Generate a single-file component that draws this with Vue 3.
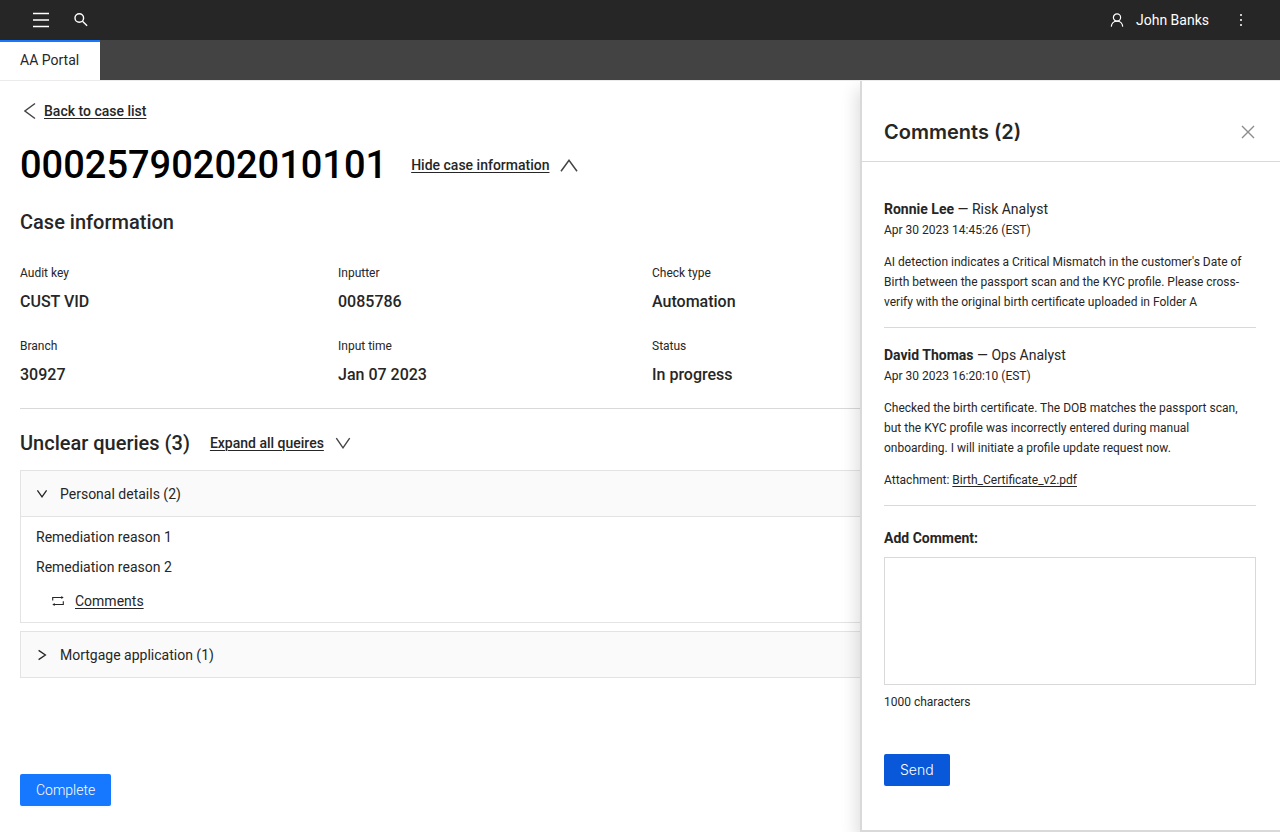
<script setup>
import { ref } from 'vue'

const facts = [
  { label: 'Audit key', value: 'CUST VID' },
  { label: 'Inputter', value: '0085786' },
  { label: 'Check type', value: 'Automation' },
  { label: 'Branch', value: '30927' },
  { label: 'Input time', value: 'Jan 07 2023' },
  { label: 'Status', value: 'In progress' },
]

const comments = [
  {
    author: 'Ronnie Lee',
    role: 'Risk Analyst',
    date: 'Apr 30 2023 14:45:26 (EST)',
    text: "AI detection indicates a Critical Mismatch in the customer's Date of Birth between the passport scan and the KYC profile. Please cross-verify with the original birth certificate uploaded in Folder A",
  },
  {
    author: 'David Thomas',
    role: 'Ops Analyst',
    date: 'Apr 30 2023 16:20:10 (EST)',
    text: 'Checked the birth certificate. The DOB matches the passport scan, but the KYC profile was incorrectly entered during manual onboarding. I will initiate a profile update request now.',
    attachment: 'Birth_Certificate_v2.pdf',
  },
]

const draft = ref('')
</script>

<template>
  <div class="page">
    <header class="topbar">
      <button class="icon-btn" type="button" aria-label="Menu">
        <svg width="18" height="16" viewBox="0 0 18 16" fill="none" stroke="#fff" stroke-width="1.5">
          <path d="M1 1.5h16M1 8h16M1 14.5h16" />
        </svg>
      </button>
      <button class="icon-btn search" type="button" aria-label="Search">
        <svg width="16" height="16" viewBox="0 0 16 16" fill="none" stroke="#fff" stroke-width="1.4">
          <circle cx="6.3" cy="6" r="4.3" />
          <path d="M9.5 9.2l4.6 4.6" />
        </svg>
      </button>
      <div class="user">
        <svg width="14" height="14" viewBox="0 0 14 14" fill="none" stroke="#fff" stroke-width="1.2">
          <circle cx="7" cy="4.5" r="3.6" />
          <path d="M1.3 13.6c.2-3 2.4-5.4 5.7-5.4s5.5 2.4 5.7 5.4" />
        </svg>
        <span>John Banks</span>
      </div>
      <button class="icon-btn" type="button" aria-label="More">
        <svg width="16" height="16" viewBox="0 0 16 16" fill="#fff">
          <circle cx="8" cy="3" r="1" />
          <circle cx="8" cy="8" r="1" />
          <circle cx="8" cy="13" r="1" />
        </svg>
      </button>
    </header>

    <nav class="tabs">
      <a class="tab" href="#">AA Portal</a>
    </nav>

    <div class="body">
      <main class="main">
        <a class="back" href="#">
          <svg width="12" height="18" viewBox="0 0 12 18" fill="none" stroke="#444" stroke-width="1.5">
            <path d="M11 1.5L.9 9 11 16.5" />
          </svg>
          <span class="underlined">Back to case list</span>
        </a>

        <div class="case-head">
          <h1>00025790202010101</h1>
          <button class="toggle" type="button">
            <span class="underlined">Hide case information</span>
            <svg width="18" height="14" viewBox="0 0 18 14" fill="none" stroke="#444" stroke-width="1.5">
              <path d="M1 13.3L9 2.3l8 11" />
            </svg>
          </button>
        </div>

        <h2 class="info-title">Case information</h2>
        <dl class="facts">
          <div v-for="fact in facts" :key="fact.label">
            <dt>{{ fact.label }}</dt>
            <dd>{{ fact.value }}</dd>
          </div>
        </dl>

        <section class="queries">
          <div class="queries-head">
            <h2>Unclear queries (3)</h2>
            <button class="toggle" type="button">
              <span class="underlined">Expand all queires</span>
              <svg width="16" height="12" viewBox="0 0 16 12" fill="none" stroke="#444" stroke-width="1.4">
                <path d="M1.3 1.2L8 10.8 14.7 1.2" />
              </svg>
            </button>
          </div>

          <div class="card">
            <button class="card-head" type="button" aria-expanded="true">
              <svg width="12" height="12" viewBox="0 0 12 12" fill="none" stroke="#262626" stroke-width="1.3">
                <path d="M1.4 2.4L6 8.8l4.6-6.4" />
              </svg>
              <span>Personal details (2)</span>
            </button>
            <div class="card-body">
              <p>Remediation reason 1</p>
              <p>Remediation reason 2</p>
              <a class="comments-link" href="#">
                <svg width="12" height="12" viewBox="0 0 12 12" fill="none" stroke="#262626" stroke-width="1.1">
                  <path d="M.7 5.6V2.5h9.5M11.3 6.2v3.3H1.8" />
                  <path d="M9.3.9l2.4 1.6-2.4 1.6zM2.7 7.9L.3 9.5l2.4 1.6z" fill="#262626" stroke="none" />
                </svg>
                <span class="underlined">Comments</span>
              </a>
            </div>
          </div>

          <div class="card">
            <button class="card-head" type="button" aria-expanded="false">
              <svg width="12" height="12" viewBox="0 0 12 12" fill="none" stroke="#262626" stroke-width="1.3">
                <path d="M2.6 1.4L9.4 6l-6.8 4.6" />
              </svg>
              <span>Mortgage application (1)</span>
            </button>
          </div>
        </section>

        <button class="primary complete" type="button">Complete</button>
      </main>

      <aside class="drawer">
        <div class="drawer-head">
          <h2>Comments (2)</h2>
          <button class="icon-btn" type="button" aria-label="Close">
            <svg width="16" height="16" viewBox="0 0 16 16" fill="none" stroke="#8c8c8c" stroke-width="1.4">
              <path d="M2 2l12 12M14 2L2 14" />
            </svg>
          </button>
        </div>
        <div class="drawer-body">
          <article v-for="comment in comments" :key="comment.author" class="comment">
            <p class="author"><strong>{{ comment.author }}</strong> — {{ comment.role }}</p>
            <p class="date">{{ comment.date }}</p>
            <p class="text">{{ comment.text }}</p>
            <p v-if="comment.attachment" class="text">
              Attachment: <a class="underlined" href="#">{{ comment.attachment }}</a>
            </p>
          </article>
          <form class="add" @submit.prevent>
            <label for="new-comment">Add Comment:</label>
            <textarea id="new-comment" v-model="draft" maxlength="1000"></textarea>
            <p class="hint">1000 characters</p>
            <button class="primary send" type="submit">Send</button>
          </form>
        </div>
      </aside>
    </div>
  </div>
</template>

<style>
body {
  background: #fff;
}
</style>

<style scoped>
.page {
  display: flex;
  flex-direction: column;
  min-height: 100vh;
  box-sizing: border-box;
  font-family: Roboto, "Liberation Sans", sans-serif;
  font-size: 14px;
  line-height: 20px;
  color: #262626;
}
.page * {
  box-sizing: border-box;
}
h1, h2, p, dl, dd {
  margin: 0;
}
a {
  color: inherit;
  text-decoration: none;
}
button {
  font: inherit;
  color: inherit;
  background: none;
  border: 0;
  padding: 0;
}
svg {
  display: block;
  flex: none;
}
h2 {
  font-size: 20px;
  line-height: 28px;
  font-weight: 500;
}
.underlined {
  text-decoration: underline;
  text-decoration-thickness: 1px;
  text-underline-offset: 2px;
}

.topbar {
  display: flex;
  align-items: center;
  height: 40px;
  padding: 0 31px 0 32px;
  background: #262626;
  color: #fff;
}
.search {
  margin-left: 23px;
}
.user {
  display: flex;
  align-items: center;
  gap: 12px;
  margin: 0 24px 0 auto;
}
.tabs {
  display: flex;
  height: 40px;
  background: #434343;
}
.tab {
  display: flex;
  align-items: center;
  padding: 0 21px 2px 20px;
  border-top: 2px solid #1677ff;
  background: #fff;
}

.body {
  display: grid;
  grid-template-columns: minmax(0, 1fr) 420px;
  flex: 1;
  border-top: 1px solid #ebebeb;
}
.main {
  display: flex;
  flex-direction: column;
  align-items: stretch;
  padding: 20px 0 26px 20px;
}
.back {
  display: flex;
  align-items: center;
  align-self: flex-start;
  gap: 8px;
  margin-left: 4px;
  font-weight: 500;
}
.case-head {
  display: flex;
  align-items: center;
  gap: 24px;
  margin-top: 20px;
}
h1 {
  font-size: 38px;
  line-height: 48px;
  font-weight: 500;
  color: #000;
}
.toggle {
  display: flex;
  align-items: center;
  gap: 11px;
  font-weight: 500;
}
.info-title {
  margin-top: 19px;
}
.facts {
  display: grid;
  grid-template-columns: 318px 314px 1fr;
  row-gap: 22px;
  margin-top: 27px;
  padding-bottom: 21px;
  border-bottom: 1px solid #d9d9d9;
}
dt {
  font-size: 12px;
}
dd {
  margin-top: 7px;
  font-size: 16px;
  line-height: 24px;
  font-weight: 500;
}
.queries {
  display: flex;
  flex-direction: column;
  gap: 8px;
  margin-top: 20px;
}
.queries-head {
  display: flex;
  align-items: center;
  gap: 20px;
  margin-bottom: 5px;
}
.card {
  border: 1px solid #e3e3e3;
  border-right: 0;
}
.card-head {
  display: flex;
  align-items: center;
  gap: 12px;
  width: 100%;
  height: 45px;
  padding: 0 15px;
  background: #fafafa;
}
.card-body {
  display: flex;
  flex-direction: column;
  align-items: flex-start;
  gap: 10px;
  padding: 10px 15px 11px;
  border-top: 1px solid #e3e3e3;
}
.comments-link {
  display: flex;
  align-items: center;
  gap: 11px;
  margin: 4px 0 0 16px;
}
.primary {
  height: 32px;
  padding: 0 16px;
  border-radius: 2px;
  color: #fff;
  font-weight: 300;
}
.complete {
  align-self: flex-start;
  margin-top: auto;
  background: #1677ff;
  box-shadow: 0 2px 0 rgba(5, 145, 255, 0.04);
}

.drawer {
  border: 2px solid #d9d9d9;
  border-width: 0 0 2px 2px;
  background: #fff;
  box-shadow: -3px 8px 16px rgba(0, 0, 0, 0.14);
  clip-path: inset(0 0 -24px -24px);
}
.drawer-head {
  display: flex;
  align-items: center;
  justify-content: space-between;
  padding: 37px 24px 15px 22px;
  border-bottom: 1px solid #d9d9d9;
}
.drawer-head h2 {
  font-family: Inter, Roboto, sans-serif;
  font-weight: 600;
}
.drawer-body {
  padding: 20px 24px 44px 22px;
}
.comment {
  padding: 17px 0 15px;
  border-bottom: 1px solid #d9d9d9;
}
.comment strong {
  font-weight: 700;
}
.date {
  margin-top: 1px;
  font-size: 12px;
}
.text {
  margin-top: 12px;
  padding-right: 8px;
  font-size: 12px;
}
.add {
  display: flex;
  flex-direction: column;
  align-items: flex-start;
  padding-top: 22px;
}
.add label {
  font-weight: 700;
}
.add textarea {
  width: 100%;
  height: 128px;
  margin-top: 9px;
  padding: 8px;
  border: 1px solid #d9d9d9;
  background: #fff;
  font: inherit;
  resize: none;
}
.hint {
  margin-top: 7px;
  font-size: 12px;
}
.send {
  margin-top: 42px;
  background: #0958d9;
  font-family: Inter, Roboto, sans-serif;
}
</style>
